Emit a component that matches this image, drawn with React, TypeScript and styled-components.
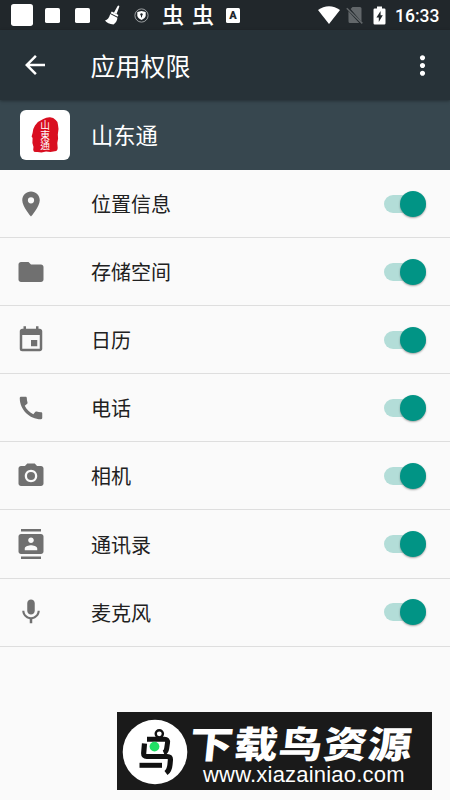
import React, { useState } from 'react';
import styled, { createGlobalStyle } from 'styled-components';
import {
  MdArrowBack,
  MdCall,
  MdContacts,
  MdEvent,
  MdFolder,
  MdMic,
  MdMoreVert,
  MdPhotoCamera,
  MdPlace,
} from 'react-icons/md';

const GlobalStyle = createGlobalStyle`
  * {
    box-sizing: border-box;
  }
  body {
    margin: 0;
    background: #fafafa;
    font-family: Roboto, 'Noto Sans CJK SC', sans-serif;
  }
`;

const Page = styled.div`
  display: flex;
  flex-direction: column;
  width: 450px;
  height: 800px;
  overflow: hidden;
  background: #fafafa;
`;

const StatusBar = styled.div`
  display: flex;
  align-items: center;
  height: 30px;
  padding: 0 11px 0 11px;
  background: #21272b;
  color: #fff;
`;
const Notifications = styled.div`
  display: flex;
  align-items: center;
  flex: 1;
`;
const Block = styled.div<{ size: number; gap: number }>`
  width: ${({ size }) => size}px;
  height: ${({ size }) => size}px;
  margin-right: ${({ gap }) => gap}px;
  border-radius: ${({ size }) => size / 8}px;
  background: #fff;
`;
const Worm = styled.span`
  width: 20px;
  height: 30px;
  margin-right: 10px;
  padding-top: 1px;
  font-size: 22px;
  line-height: 30px;
  font-weight: 500;
  text-indent: -1px;
`;
const LetterBadge = styled.div`
  width: 14px;
  height: 15px;
  margin-left: 3px;
  border-radius: 1.5px;
  background: #fff;
  color: #21272b;
  font-size: 11px;
  line-height: 15px;
  font-weight: 900;
  text-align: center;
`;
const SystemIcons = styled.div`
  display: flex;
  align-items: center;
`;
const Clock = styled.span`
  width: 44px;
  height: 30px;
  margin-left: 9px;
  padding-top: 1px;
  font-size: 17.5px;
  line-height: 30px;
  font-weight: 500;
  white-space: nowrap;
`;

const AppBar = styled.header`
  display: flex;
  align-items: center;
  height: 70px;
  padding: 0 12px 0 20px;
  background: #273238;
  color: #fff;
  box-shadow: 0 1px 3px rgba(0, 0, 0, 0.35);
  z-index: 1;
`;
const Title = styled.h1`
  flex: 1;
  margin: 0 0 0 40.5px;
  padding-top: 5px;
  font-size: 25px;
  line-height: 36px;
  font-weight: 400;
`;

const AppHeader = styled.div`
  display: flex;
  align-items: center;
  flex: none;
  height: 70px;
  padding-left: 20px;
  background: #37474f;
  color: #fff;
`;
const AppIcon = styled.div`
  display: flex;
  align-items: center;
  justify-content: center;
  width: 50px;
  height: 50px;
  margin-right: 21px;
  border-radius: 6px;
  background: #fff;
`;
const AppName = styled.span`
  padding-bottom: 2px;
  font-size: 22.3px;
`;

const Row = styled.div`
  display: flex;
  align-items: center;
  flex: none;
  height: 68.1px;
  padding: 0 24px 0 16px;
  border-bottom: 1.5px solid #dedede;
  color: #707070;
`;
const RowIcon = styled.span`
  display: flex;
  width: 30px;
  margin-left: -0.5px;
`;
const Label = styled.span`
  flex: 1;
  margin-left: 45.5px;
  color: #212121;
  font-size: 20px;
`;
const Switch = styled.button<{ $on: boolean }>`
  display: flex;
  align-items: center;
  justify-content: ${({ $on }) => ($on ? 'flex-end' : 'flex-start')};
  width: 42px;
  height: 18px;
  padding: 0;
  border: 0;
  border-radius: 9px;
  background: ${({ $on }) => ($on ? '#b3ddd8' : '#bdbdbd')};
`;
const Thumb = styled.span<{ $on: boolean }>`
  flex: none;
  width: 26px;
  height: 26px;
  border-radius: 50%;
  background: ${({ $on }) => ($on ? '#019485' : '#f1f1f1')};
  box-shadow: 0 1px 2px rgba(0, 0, 0, 0.35);
`;

const Watermark = styled.div`
  position: absolute;
  left: 117px;
  top: 712px;
  display: flex;
  align-items: center;
  width: 315px;
  height: 78px;
  padding: 2px 0 0 5px;
  background: #1a1a1a;
  color: #fff;
`;
const SiteText = styled.div`
  display: flex;
  flex-direction: column;
  margin-left: 2px;
  padding-top: 4px;
`;
const SiteName = styled.span`
  height: 42px;
  font-family: 'Noto Sans CJK SC', sans-serif;
  font-size: 37px;
  line-height: 42px;
  font-weight: 900;
  letter-spacing: 0.8px;
  white-space: nowrap;
  transform: scaleX(1.18) skewX(-5deg);
  transform-origin: 0 50%;
`;
const SiteUrl = styled.span`
  margin-left: 13px;
  font-family: 'Liberation Sans', sans-serif;
  font-size: 22px;
  line-height: 24px;
  letter-spacing: 0.2px;
  white-space: nowrap;
`;

const BroomIcon = () => (
  <svg width="15" height="20" viewBox="0 0 15 20" fill="#fff">
    <path d="M12.6.9a1.1 1.1 0 0 1 1.7.8l-2.8 7.2-2.6-1.2z" />
    <path d="M6.8 6.6l6.6 3.3-.8 1.9-7-3.5z" />
    <path d="M5.2 9l7.2 3.7c-.1 3-1.8 5.3-4 6.7-3.7-.1-6.9-1.4-8.4-3.8 2.4-.8 4.3-2.9 5.2-6.6z" />
  </svg>
);

const ShieldIcon = () => (
  <svg width="15" height="15" viewBox="0 0 15 15">
    <circle cx="7.5" cy="7.5" r="6.6" fill="none" stroke="#a9adaf" strokeWidth="0.9" />
    <path d="M7.5 2.9l4.2 1.2v3.2c0 2.1-1.8 3.6-4.2 4.6-2.4-1-4.2-2.5-4.2-4.6V4.1z" fill="#fff" />
    <circle cx="7.5" cy="6.4" r="1.2" fill="#21272b" />
    <path d="M7.5 7v2.3" stroke="#21272b" />
  </svg>
);

const WifiIcon = () => (
  <svg width="22" height="18" viewBox="0 0 22 18">
    <path d="M11 18L0 4.1C6.5-1.2 15.5-1.2 22 4.1z" fill="#fff" />
  </svg>
);

const NoSimIcon = () => (
  <svg width="18" height="18" viewBox="0 0 18 18">
    <path d="M6.5 1H14a1.5 1.5 0 0 1 1.5 1.5v13.2L4.6 3zM2.4 5.2L13.2 17H4a1.5 1.5 0 0 1-1.5-1.5z" fill="#62676a" />
    <path d="M.8 2.2L16.3 17.4" stroke="#62676a" strokeWidth="1.5" />
  </svg>
);

const BatteryIcon = () => (
  <svg width="13" height="19" viewBox="0 0 13 19">
    <path d="M4 .5h5v2h2.3q1.2 0 1.2 1.2v13.6q0 1.2-1.2 1.2H1.7q-1.2 0-1.2-1.2V3.7q0-1.2 1.2-1.2H4z" fill="#fff" />
    <path d="M7.6 5L3.4 11.5h2.4V16l4-6.7H7.6z" fill="#21272b" />
  </svg>
);

const Seal = () => (
  <svg width="28" height="38" viewBox="0 0 28 38">
    <path
      d="M4 9.5q3-4.5 8.3-6.5 3-1.8 6.7-1.7 3.5.2 5.7 2.7 2.3 1.5 2.3 5l.5 4-.7 5.5.3 4-.8 4.5.4 5q-.3 3.5-3 3.3l-4.2.8-4.5-.6-4.5 1-4-.6q-4 .8-4.3-2l.3-3.2L1.4 27l.2-5-1-1.5 1-3.5.7-4z"
      fill="#d90e20"
    />
    <VerticalText x="14" y="4.9">
      山東通
    </VerticalText>
  </svg>
);

const BirdLogo = () => (
  <svg width="66" height="66" viewBox="0 0 66 66">
    <circle cx="33" cy="33" r="32.3" fill="#fff" />
    <g fill="none" stroke="#111" strokeLinejoin="round">
      <circle cx="37.3" cy="14.8" r="3.6" strokeWidth="2.4" />
      <path d="M25 20.3h17.5q3.5 0 3 3.5l-.8 5.5q-.5 3.500-3 4.500" strokeWidth="5" />
      <path d="M22.5 24.5l-.8 9.500q-.2 3.500 3 3.500h20.500q3.500 0 3.200 3.500l-.4 4.500q-.5 6-4 8.500" strokeWidth="5.2" />
      <path d="M17.5 46.3H40" strokeWidth="5" />
    </g>
    <circle cx="32.5" cy="27.6" r="4.9" fill="#20df65" />
  </svg>
);

const permissions = [
  { label: '位置信息', Icon: MdPlace },
  { label: '存储空间', Icon: MdFolder },
  { label: '日历', Icon: MdEvent },
  { label: '电话', Icon: MdCall },
  { label: '相机', Icon: MdPhotoCamera },
  { label: '通讯录', Icon: MdContacts },
  { label: '麦克风', Icon: MdMic },
];

const PermissionRow: React.FC<{ label: string; Icon: React.ElementType }> = ({ label, Icon }) => {
  const [on, setOn] = useState(true);
  return (
    <Row>
      <RowIcon>
        <Icon size={30} />
      </RowIcon>
      <Label>{label}</Label>
      <Switch $on={on} onClick={() => setOn(!on)}>
        <Thumb $on={on} />
      </Switch>
    </Row>
  );
};

const App: React.FC = () => {
  return (
    <Page>
      <GlobalStyle />
      <StatusBar>
        <Notifications>
          <Block size={22} gap={12} />
          <Block size={15} gap={15} />
          <Block size={15} gap={15} />
          <BroomIcon />
          <Spacer />
          <ShieldIcon />
          <Spacer />
          <Worm>虫</Worm>
          <Worm>虫</Worm>
          <LetterBadge>A</LetterBadge>
        </Notifications>
        <SystemIcons>
          <WifiIcon />
          <SimSlot>
            <NoSimIcon />
          </SimSlot>
          <BatteryIcon />
          <Clock>16:33</Clock>
        </SystemIcons>
      </StatusBar>
      <AppBar>
        <MdArrowBack size={30} />
        <Title>应用权限</Title>
        <MdMoreVert size={31} />
      </AppBar>
      <AppHeader>
        <AppIcon>
          <Seal />
        </AppIcon>
        <AppName>山东通</AppName>
      </AppHeader>
      {permissions.map((item) => (
        <PermissionRow key={item.label} {...item} />
      ))}
      <Watermark>
        <BirdLogo />
        <SiteText>
          <SiteName>下载鸟资源</SiteName>
          <SiteUrl>www.xiazainiao.com</SiteUrl>
        </SiteText>
      </Watermark>
    </Page>
  );
};
const Spacer = styled.div`
  width: 14px;
`;
const SimSlot = styled.div`
  display: flex;
  margin: 0 9px 0 6px;
`;
const VerticalText = styled.text`
  fill: #fff;
  font-family: 'Noto Sans CJK TC', sans-serif;
  font-size: 9.7px;
  writing-mode: vertical-rl;
`;
export default App;
